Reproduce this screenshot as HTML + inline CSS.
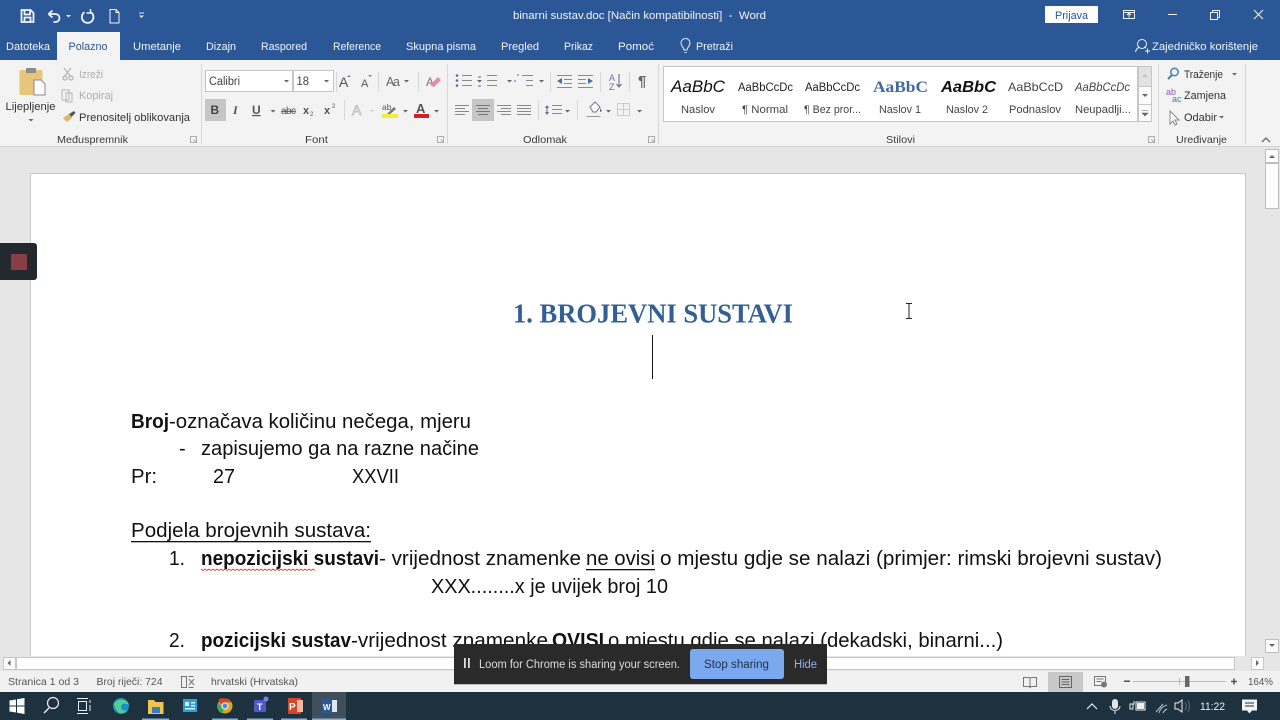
<!DOCTYPE html>
<html><head><meta charset="utf-8">
<style>
html,body{margin:0;padding:0;background:#e6e6e6;overflow:hidden;width:1280px;height:720px}
svg{display:block;position:absolute;left:0;top:0;filter:blur(.35px)}
text{font-family:"Liberation Sans",sans-serif;white-space:pre}
.rb{font-size:11px;fill:#444}
.tb{font-size:11px;fill:#f2f5fa}
.gl{font-size:10.5px;fill:#3c3c3c}
.st{font-size:10.5px;fill:#555}
.d{font-size:20px;fill:#111}
.b{font-weight:bold}
.g{fill:none;stroke:#777;stroke-width:1}
.ar{fill:#666}
</style></head><body>
<svg width="1280" height="720" viewBox="0 0 1280 720" xmlns="http://www.w3.org/2000/svg">
<!-- backgrounds -->
<rect width="1280" height="720" fill="#e6e6e6"/>
<rect width="1280" height="60" fill="#2b5797"/>
<rect y="60" width="1280" height="86" fill="#f3f3f3"/>
<rect y="146" width="1280" height="1" fill="#d4d4d4"/>
<rect x="57" y="32" width="63" height="28" fill="#f3f3f3"/>

<!-- QAT -->
<g fill="none" stroke="#f2f5fa" stroke-width="1.8">
<path d="M21.500 10h9l3 3v9h-12z"/><path d="M24.500 10.500v4h5.500v-4M24.500 22v-4.500h6V22"/>
<path d="M48.500 14l4-3.500M48.500 14l4 3.500M48.500 14h7a4 4 0 0 1 0 8h-2"/>
<path d="M90.500 12a5.800 5.800 0 1 1-6 .2"/><path d="M90.500 9v4h-4" stroke-width="1.400"/>
<path d="M110 9.500h6l3 3v10.500h-9z" stroke-width="1"/><path d="M116 9.500v3h3" stroke-width="1"/>
</g>
<path d="M66 15h5l-2.500 2.500zM139 15.500h5l-2.500 2.500z" fill="#dfe6f2"/>
<rect x="139" y="12.500" width="5" height="1" fill="#dfe6f2"/>

<!-- title bar -->
<text x="513" y="19" class="tb" textLength="253" lengthAdjust="spacingAndGlyphs">binarni sustav.doc [Način kompatibilnosti]  -  Word</text>
<rect x="1045" y="6" width="53" height="17" fill="#fdfdfd"/>
<text x="1055" y="19" style="font-size:11px;fill:#2b5797" textLength="33" lengthAdjust="spacingAndGlyphs">Prijava</text>
<g fill="none" stroke="#eef2f8" stroke-width="1">
<path d="M1123.500 10.500h11v8h-11zM1123.500 12.500h11M1129 17.500v-4M1127 15l2-2 2 2"/>
<path d="M1168 14.500h9"/>
<path d="M1210.500 12.500h7v7h-7zM1212.500 12.500v-2h7v7h-2"/>
<path d="M1254 10l9 9M1263 10l-9 9" stroke-width="1.100"/>
</g>

<!-- tabs -->
<g class="tb">
<text x="6" y="50" class="tb" textLength="44" lengthAdjust="spacingAndGlyphs">Datoteka</text>
<text x="68.500" y="50" style="font-size:11px;fill:#2b5797" textLength="39" lengthAdjust="spacingAndGlyphs">Polazno</text>
<text x="133" y="50" class="tb" textLength="48" lengthAdjust="spacingAndGlyphs">Umetanje</text>
<text x="206" y="50" class="tb" textLength="30" lengthAdjust="spacingAndGlyphs">Dizajn</text>
<text x="261" y="50" class="tb" textLength="46" lengthAdjust="spacingAndGlyphs">Raspored</text>
<text x="333" y="50" class="tb" textLength="48" lengthAdjust="spacingAndGlyphs">Reference</text>
<text x="406" y="50" class="tb" textLength="70" lengthAdjust="spacingAndGlyphs">Skupna pisma</text>
<text x="501" y="50" class="tb" textLength="38" lengthAdjust="spacingAndGlyphs">Pregled</text>
<text x="564" y="50" class="tb" textLength="29" lengthAdjust="spacingAndGlyphs">Prikaz</text>
<text x="618" y="50" class="tb" textLength="36" lengthAdjust="spacingAndGlyphs">Pomoć</text>
<text x="696" y="50" class="tb" textLength="37" lengthAdjust="spacingAndGlyphs">Pretraži</text>
<text x="1152" y="50" class="tb" textLength="106" lengthAdjust="spacingAndGlyphs">Zajedničko korištenje</text>
</g>
<g fill="none" stroke="#eef2f8" stroke-width="1">
<path d="M684 50c0-2.500-3-4-3-7a4.500 4.500 0 0 1 9 0c0 3-3 4.500-3 7zM684.500 52.500h2"/>
<circle cx="1142" cy="44" r="4.500"/><path d="M1135.500 52c.5-3 3-4.500 4-5M1144 47l2 1M1145 51h5M1147.500 48.500v5"/>
</g>

<!-- ribbon separators -->
<g fill="#d8d8d8">
<rect x="201" y="64" width="1" height="80"/><rect x="447" y="64" width="1" height="80"/>
<rect x="658" y="64" width="1" height="80"/><rect x="1158" y="64" width="1" height="80"/>
<rect x="1245" y="64" width="1" height="80"/>
<rect x="336" y="72" width="1" height="20"/><rect x="378" y="72" width="1" height="20"/><rect x="418" y="72" width="1" height="20"/>
<rect x="344" y="100" width="1" height="20"/><rect x="550" y="72" width="1" height="20"/><rect x="600" y="72" width="1" height="20"/><rect x="629" y="72" width="1" height="20"/>
<rect x="538" y="100" width="1" height="20"/><rect x="577" y="100" width="1" height="20"/>
</g>

<!-- clipboard -->
<rect x="19.500" y="70" width="23" height="25" rx="1" fill="#e8c57c"/>
<rect x="26" y="68" width="10" height="5" fill="#8d8d8d"/>
<path d="M34 80h7l4 4v11H34z" fill="#fff" stroke="#8a8a8a"/>
<text x="5.500" y="110" class="rb" style="fill:#333" textLength="50" lengthAdjust="spacingAndGlyphs">Lijepljenje</text>
<path d="M28.500 119h5l-2.500 2.500z" class="ar"/>
<g fill="none" stroke="#b5b5b5" stroke-width="1.200"><path d="M64 68l7 9M71 68l-7 9"/><circle cx="65" cy="78" r="2"/><circle cx="71" cy="78" r="2"/>
<path d="M62 90h7v10h-7zM66 93h6v9h-6z" stroke-width="1"/></g>
<text x="79" y="78" class="rb" style="fill:#adadad" textLength="24" lengthAdjust="spacingAndGlyphs">Izreži</text>
<text x="79" y="99" class="rb" style="fill:#adadad" textLength="34" lengthAdjust="spacingAndGlyphs">Kopiraj</text>
<path d="M63 118l6-4 3 4-5 4z" fill="#dbb66c"/><path d="M69 114l5-3 1.500 2-4 4z" fill="#555"/>
<text x="79" y="121" class="rb" style="fill:#333" textLength="111" lengthAdjust="spacingAndGlyphs">Prenositelj oblikovanja</text>
<text x="57" y="143" class="gl" textLength="71" lengthAdjust="spacingAndGlyphs">Međuspremnik</text>
<path d="M190.500 136.500h6v6h-6z M193.500 139.500l3 3" fill="none" stroke="#999" stroke-width=".8"/>

<!-- font -->
<rect x="205.500" y="70.500" width="87" height="21" fill="#fff" stroke="#c6c6c6"/>
<rect x="293.500" y="70.500" width="40" height="21" fill="#fff" stroke="#c6c6c6"/>
<text x="209" y="85" class="rb" style="font-size:11.500px" textLength="31" lengthAdjust="spacingAndGlyphs">Calibri</text>
<text x="296.500" y="85" class="rb" style="font-size:11.500px" textLength="12.500" lengthAdjust="spacingAndGlyphs">18</text>
<path d="M284 80h5l-2.500 2.500zM324 80h5l-2.500 2.500z" class="ar"/>
<text x="339" y="87" style="font-size:14px;fill:#555">A</text><path d="M347 77l2-2 2 2z" fill="#6a8ab0"/>
<text x="361" y="87" style="font-size:11px;fill:#555">A</text><path d="M368 75l2 2 2-2z" fill="#6a8ab0"/>
<text x="386" y="86" style="font-size:12.500px;fill:#666" textLength="14">Aa</text><path d="M404 80h5l-2.500 2.500z" class="ar"/>
<text x="426" y="86" style="font-size:12px;fill:#777">A</text><path d="M430 85l8-8 3 3-7 7z" fill="#e78ba0"/>
<rect x="205" y="99" width="21" height="22" fill="#c6c6c6"/>
<text x="210.500" y="114" style="font-size:12px;font-weight:bold;fill:#444">B</text>
<text x="233" y="114" style="font-size:12px;font-style:italic;font-weight:bold;fill:#555;font-family:'Liberation Serif',serif">I</text>
<text x="252" y="114" style="font-size:12px;font-weight:bold;fill:#555;text-decoration:underline">U</text>
<path d="M270.500 110h5l-2.500 2.500z" class="ar"/>
<text x="281" y="114" style="font-size:10px;fill:#555;text-decoration:line-through" textLength="15">abc</text>
<text x="303" y="114" style="font-size:11px;font-weight:bold;fill:#555">x</text><text x="310" y="116" style="font-size:6px;fill:#555">2</text>
<text x="324" y="114" style="font-size:11px;font-weight:bold;fill:#555">x</text><text x="332" y="108" style="font-size:6px;fill:#555">2</text>
<text x="352" y="115" style="font-size:14px;fill:#f3f3f3;stroke:#bbb;stroke-width:.8">A</text><path d="M370 110h4l-2 2z" fill="#ccc"/>
<text x="382" y="110" style="font-size:8.500px;fill:#555">ab</text><path d="M387 114l7-7 2 2-7 6z" fill="#777"/>
<rect x="382" y="114" width="16" height="4" fill="#f4ee30"/><path d="M403 110h5l-2.500 2.500z" class="ar"/>
<text x="416" y="113" style="font-size:13px;font-weight:bold;fill:#555">A</text><rect x="414" y="114" width="15" height="4" fill="#d81e1e"/><path d="M434 110h5l-2.500 2.500z" class="ar"/>
<text x="305" y="143" class="gl" textLength="23" lengthAdjust="spacingAndGlyphs">Font</text>
<path d="M437.500 136.500h6v6h-6z M440.500 139.500l3 3" fill="none" stroke="#999" stroke-width=".8"/>

<!-- paragraph -->
<g stroke="#8a8a8a" stroke-width="1" fill="none">
<path d="M462 75.500h10M462 80.500h10M462 85.500h10M487 75.500h10M487 80.500h10M487 85.500h10M522 75.500h11M526 80.500h7M526 85.500h7M557 75.500h15M564 79.500h8M564 83.500h8M557 87.500h15M578 75.500h15M578 79.500h8M578 83.500h8M578 87.500h15"/>
<path d="M455 105.500h14M455 108.500h10M455 111.500h14M455 114.500h10M476 105.500h14M478 108.500h10M476 111.500h14M478 114.500h10M497 105.500h14M501 108.500h10M497 111.500h14M501 114.500h10M517 105.500h14M517 108.500h14M517 111.500h14M517 114.500h14M552 105.500h10M552 109.500h10M552 113.500h10"/>
</g>
<rect x="472" y="99" width="22" height="22" fill="#c6c6c6"/>
<path d="M476 105.500h14M478 108.500h10M476 111.500h14M478 114.500h10" stroke="#777" fill="none"/>
<g fill="#4a6fa5"><circle cx="457" cy="75.500" r="1.300"/><circle cx="457" cy="80.500" r="1.300"/><circle cx="457" cy="85.500" r="1.300"/>
<path d="M557 81l5-3v6zM593 81l-5-3v6z"/><path d="M545 108l2-3 2 3zM545 112l2 3 2-3z"/><rect x="546.500" y="107" width="1" height="6"/></g>
<path d="M478 77h3M478 81h3M478 86h3M517 75h2M514 81h2" stroke="#4a6fa5" fill="none"/>
<text x="609" y="81" style="font-size:9px;fill:#5a7dab">A</text><text x="609" y="90" style="font-size:9px;fill:#8a5db0">Z</text>
<path d="M619 74v13M616.500 84l2.500 3 2.500-3" stroke="#666" fill="none"/>
<text x="638" y="86" style="font-size:15px;font-weight:bold;fill:#666">¶</text>
<path d="M477 80h5l-2.500 2.500zM507 80h5l-2.500 2.500zM539 80h5l-2.500 2.500zM565 110h5l-2.500 2.500zM606 110h5l-2.500 2.500zM637 110h5l-2.500 2.500z" class="ar"/>
<path d="M590 107l5-5 5 5-4 5h-3z" fill="#fff" stroke="#777"/><path d="M600 108l2 3-2 1z" fill="#4a6fa5"/><path d="M586.500 116.500h14" stroke="#999" fill="none"/>
<path d="M617.500 103.500h12v12h-12zM623.500 103.500v12M617.500 109.500h12" stroke="#aaa" stroke-dasharray="1 1" fill="none"/>
<text x="523" y="143" class="gl" textLength="44" lengthAdjust="spacingAndGlyphs">Odlomak</text>
<path d="M648.500 136.500h6v6h-6z M651.500 139.500l3 3" fill="none" stroke="#999" stroke-width=".8"/>

<!-- styles -->
<rect x="663.500" y="66.500" width="474" height="55" fill="#fff" stroke="#c6c6c6"/>
<rect x="1138" y="66.500" width="14" height="55" fill="#f3f3f3"/>
<path d="M1138.500 66.500h13v20h-13zM1138.500 86.500h13v18h-13zM1138.500 104.500h13v17h-13z" fill="#fbfbfb" stroke="#c6c6c6"/>
<rect x="1139" y="67" width="12" height="19" fill="#e2e2e2"/>
<path d="M1142 77l3-3 3 3z" fill="#c4c4c4"/><path d="M1142 94h6l-3 3z" class="ar"/><path d="M1142 110.500h6M1142 113h6l-3 3z" fill="#666" stroke="#666" stroke-width=".6"/>
<text x="671" y="92" style="font-size:17px;font-style:italic;fill:#111" textLength="54" lengthAdjust="spacingAndGlyphs">AaBbC</text>
<text x="738" y="91" style="font-size:11.500px;fill:#222" textLength="55" lengthAdjust="spacingAndGlyphs">AaBbCcDc</text>
<text x="805" y="91" style="font-size:11.500px;fill:#222" textLength="55" lengthAdjust="spacingAndGlyphs">AaBbCcDc</text>
<text x="873" y="92" style="font-size:16px;font-weight:bold;fill:#3f6a9c;font-family:'Liberation Serif',serif" textLength="55" lengthAdjust="spacingAndGlyphs">AaBbC</text>
<text x="941" y="92" style="font-size:16px;font-weight:bold;font-style:italic;fill:#111" textLength="55" lengthAdjust="spacingAndGlyphs">AaBbC</text>
<text x="1008" y="91" style="font-size:12px;fill:#444" textLength="55" lengthAdjust="spacingAndGlyphs">AaBbCcD</text>
<text x="1075" y="91" style="font-size:11.500px;font-style:italic;fill:#444" textLength="55" lengthAdjust="spacingAndGlyphs">AaBbCcDc</text>
<g class="rb">
<text x="681" y="113" class="rb" textLength="34" lengthAdjust="spacingAndGlyphs">Naslov</text>
<text x="742" y="113" class="rb" textLength="46" lengthAdjust="spacingAndGlyphs">¶ Normal</text>
<text x="804" y="113" class="rb" textLength="57" lengthAdjust="spacingAndGlyphs">¶ Bez pror...</text>
<text x="879" y="113" class="rb" textLength="42" lengthAdjust="spacingAndGlyphs">Naslov 1</text>
<text x="946" y="113" class="rb" textLength="42" lengthAdjust="spacingAndGlyphs">Naslov 2</text>
<text x="1009" y="113" class="rb" textLength="52" lengthAdjust="spacingAndGlyphs">Podnaslov</text>
<text x="1075" y="113" class="rb" textLength="56" lengthAdjust="spacingAndGlyphs">Neupadlji...</text>
</g>
<text x="886" y="143" class="gl" textLength="29" lengthAdjust="spacingAndGlyphs">Stilovi</text>
<path d="M1148.500 136.500h6v6h-6z M1151.500 139.500l3 3" fill="none" stroke="#999" stroke-width=".8"/>

<!-- editing -->
<circle cx="1174.500" cy="72" r="3.700" fill="none" stroke="#4f7fb8" stroke-width="1.500"/><path d="M1172 75l-4 4" stroke="#4f7fb8" stroke-width="2"/>
<text x="1184" y="78" class="rb" style="fill:#333" textLength="39" lengthAdjust="spacingAndGlyphs">Traženje</text>
<path d="M1232 73h5l-2.500 2.500z" class="ar"/>
<text x="1166" y="95" style="font-size:9px;fill:#8a5db0">ab</text><text x="1172" y="102" style="font-size:9px;fill:#3f78b8">ac</text>
<text x="1184" y="99" class="rb" style="fill:#333" textLength="42" lengthAdjust="spacingAndGlyphs">Zamjena</text>
<path d="M1170 111v13l3-3 2 4 2-1-2-4h4z" fill="#fff" stroke="#888"/>
<text x="1184" y="121" class="rb" style="fill:#333" textLength="33" lengthAdjust="spacingAndGlyphs">Odabir</text>
<path d="M1219 116h5l-2.500 2.500z" class="ar"/>
<text x="1176" y="143" class="gl" textLength="51" lengthAdjust="spacingAndGlyphs">Uređivanje</text>
<path d="M1262 142l4-4 4 4" fill="none" stroke="#666" stroke-width="1.300"/>

<!-- page -->
<rect x="30.500" y="173.500" width="1215" height="484" fill="#fff" stroke="#c9c9c9"/>

<!-- doc text -->
<text x="513" y="322.500" style="font-family:'Liberation Serif',serif;font-size:27px;font-weight:bold;fill:#335f95" textLength="280" lengthAdjust="spacingAndGlyphs">1. BROJEVNI SUSTAVI</text>
<rect x="652" y="335" width="1" height="44" fill="#111"/>
<path d="M906 303.500h2.500l.5.500.5-.5h2.500M906 318.500h2.500l.5-.5.5.5h2.500M909 304v14" stroke="#222" fill="none"/>

<text x="131" y="428" class="d b" textLength="38" lengthAdjust="spacingAndGlyphs">Broj</text>
<text x="169" y="428" class="d" textLength="302" lengthAdjust="spacingAndGlyphs">-označava količinu nečega, mjeru</text>
<text x="179" y="455" class="d">-</text>
<text x="201" y="455" class="d" textLength="278" lengthAdjust="spacingAndGlyphs">zapisujemo ga na razne načine</text>
<text x="131" y="483" class="d" textLength="26" lengthAdjust="spacingAndGlyphs">Pr:</text>
<text x="213" y="483" class="d" textLength="22" lengthAdjust="spacingAndGlyphs">27</text>
<text x="352" y="483" class="d" textLength="47" lengthAdjust="spacingAndGlyphs">XXVII</text>
<text x="131" y="537" class="d" textLength="240" lengthAdjust="spacingAndGlyphs">Podjela brojevnih sustava:</text>
<rect x="131" y="541" width="240" height="1.300" fill="#111"/>
<text x="169" y="565" class="d" textLength="16" lengthAdjust="spacingAndGlyphs">1.</text>
<text x="201" y="565" class="d b" textLength="178" lengthAdjust="spacingAndGlyphs">nepozicijski sustavi</text>
<text x="379" y="565" class="d" textLength="202" lengthAdjust="spacingAndGlyphs">- vrijednost znamenke</text>
<text x="586" y="565" class="d" textLength="69" lengthAdjust="spacingAndGlyphs">ne ovisi</text>
<rect x="586" y="569" width="69" height="1.300" fill="#111"/>
<text x="660" y="565" class="d" textLength="502" lengthAdjust="spacingAndGlyphs">o mjestu gdje se nalazi (primjer: rimski brojevni sustav)</text>
<path d="M201 569l2 1.500 2-1.500 2 1.500 2-1.500 2 1.500 2-1.500 2 1.500 2-1.500 2 1.500 2-1.500 2 1.500 2-1.500 2 1.500 2-1.500 2 1.500 2-1.500 2 1.500 2-1.500 2 1.500 2-1.500 2 1.500 2-1.500 2 1.500 2-1.500 2 1.500 2-1.500 2 1.500 2-1.500 2 1.500 2-1.500 2 1.500 2-1.500 2 1.500 2-1.500 2 1.500 2-1.500 2 1.500 2-1.500 2 1.500 2-1.500 2 1.500 2-1.500 2 1.500 2-1.500 2 1.500 2-1.500 2 1.500 2-1.500 2 1.500 2-1.500 2 1.500 2-1.500 2 1.500 2-1.500 2 1.500 2-1.500 2 1.500" fill="none" stroke="#d9342c" stroke-width=".8"/>
<text x="431" y="593" class="d" textLength="237" lengthAdjust="spacingAndGlyphs">XXX........x je uvijek broj 10</text>
<text x="169" y="647" class="d" textLength="16" lengthAdjust="spacingAndGlyphs">2.</text>
<text x="201" y="647" class="d b" textLength="150" lengthAdjust="spacingAndGlyphs">pozicijski sustav</text>
<text x="351" y="647" class="d" textLength="197" lengthAdjust="spacingAndGlyphs">-vrijednost znamenke</text>
<text x="552" y="647" class="d b" textLength="52" lengthAdjust="spacingAndGlyphs">OVISI</text>
<rect x="552" y="651" width="52" height="1.300" fill="#111"/>
<text x="608" y="647" class="d" textLength="395" lengthAdjust="spacingAndGlyphs">o mjestu gdje se nalazi (dekadski, binarni...)</text>

<!-- left widget -->
<path d="M0 243h34a3 3 0 0 1 3 3v31a3 3 0 0 1-3 3H0z" fill="#23292f"/>
<rect x="11" y="254" width="16" height="16" rx="1" fill="#8b3d44"/>

<!-- v scrollbar -->
<rect x="1264" y="147" width="16" height="510" fill="#e6e6e6"/>
<rect x="1265.500" y="149.500" width="13" height="13" fill="#fdfdfd" stroke="#bdbdbd"/>
<path d="M1269 158l3-3 3 3z" fill="#666"/>
<rect x="1265.500" y="163.500" width="13" height="45" fill="#fdfdfd" stroke="#bdbdbd"/>
<rect x="1265.500" y="639.500" width="13" height="13" fill="#fdfdfd" stroke="#bdbdbd"/>
<path d="M1269 644h6l-3 3z" fill="#666"/>

<!-- h scrollbar -->
<rect y="656" width="1280" height="15" fill="#e6e6e6"/>
<rect x="3.500" y="657.500" width="12" height="12" fill="#fdfdfd" stroke="#c6c6c6"/>
<path d="M10.500 660v6l-3-3z" fill="#666"/>
<rect x="16.500" y="657.500" width="1218" height="12" fill="#fff" stroke="#c6c6c6"/>
<rect x="1251.500" y="657.500" width="12" height="12" fill="#fdfdfd" stroke="#c6c6c6"/>
<path d="M1256 660v6l3-3z" fill="#666"/>

<!-- status bar -->
<rect y="671" width="1280" height="21" fill="#f1f1f1"/>
<text x="8" y="685" class="st" textLength="71" lengthAdjust="spacingAndGlyphs">Stranica 1 od 3</text>
<text x="96.500" y="685" class="st" textLength="66" lengthAdjust="spacingAndGlyphs">Broj riječi: 724</text>
<path d="M181.500 676.500h5v11h-5zM188.500 676.500h5M188.500 687.500h5M189 679l5 6M194 679l-5 6" fill="none" stroke="#777"/>
<text x="211" y="685" class="st" textLength="87" lengthAdjust="spacingAndGlyphs">hrvatski (Hrvatska)</text>
<path d="M1023.500 677.500h5.500l1 1 1-1h5.500v9h-5.500l-1 1-1-1h-5.500zM1030 678v9" fill="none" stroke="#777"/>
<rect x="1048" y="672" width="35" height="20" fill="#c8c8c8"/>
<path d="M1059.500 676.500h12v11h-12zM1061.500 679.500h8M1061.500 682h8M1061.500 684.500h8" fill="none" stroke="#666"/>
<path d="M1094.500 676.500h11v9h-11zM1096.500 679h7M1096.500 681.500h5" fill="none" stroke="#777"/><circle cx="1104" cy="684.500" r="3" fill="#777"/>
<rect x="1124" y="680.500" width="6" height="1.500" fill="#555"/>
<rect x="1133" y="681" width="93" height="1" fill="#bbb"/>
<rect x="1179" y="678" width="1" height="7" fill="#bbb"/>
<rect x="1185" y="676" width="4.500" height="11" fill="#666"/>
<path d="M1231 681.500h6M1234 678.500v6" stroke="#555" stroke-width="1.500" fill="none"/>
<text x="1248" y="685" class="st" textLength="25" lengthAdjust="spacingAndGlyphs">164%</text>

<!-- taskbar -->
<rect y="692" width="1280" height="28" fill="#1e313e"/>
<g fill="#fff"><path d="M9.500 700.500l6.500-1v6h-6.500zM17 699.300l7.500-1.300v7.500H17zM9.500 706.500h6.500v6l-6.500-1zM17 706.500h7.500v7.500l-7.500-1.300z"/></g>
<circle cx="53" cy="703" r="5.500" fill="none" stroke="#eee" stroke-width="1.200"/><path d="M49 708l-5 5" stroke="#eee" stroke-width="1.400"/>
<path d="M78.500 701.500h8v9h-8zM77 698.500h11M77 713.500h11M90 700v3M90 705v6" fill="none" stroke="#eee"/>
<circle cx="121" cy="706" r="8" fill="#1a8fce"/><path d="M114 704c2-6 13-6 15 1-3-2-8-2-8 2 0 3 4 5 7 3-3 4-8 4-10 2-2-2-3-5-4-8z" fill="#4fd08a"/>
<path d="M148 700h6l1.500 2h8v12h-15.500z" fill="#f0c34d"/><rect x="152" y="707" width="8" height="6" fill="#3e7cc0"/>
<rect x="183" y="699" width="14" height="13" fill="#2d9fd6"/><rect x="185" y="702" width="4" height="4" fill="#d8ecf7"/><rect x="191" y="702" width="4" height="1.500" fill="#d8ecf7"/><rect x="191" y="705" width="4" height="1.500" fill="#d8ecf7"/><rect x="185" y="708" width="10" height="1.500" fill="#d8ecf7"/>
<circle cx="225" cy="706" r="7.500" fill="#d8a820"/><path d="M225 698.500a7.500 7.500 0 0 1 6.500 3.700H225a4 4 0 0 0-3.800 2.500l-3-5a7.500 7.500 0 0 1 6.800-1.200z" fill="#d8432f"/><path d="M218 702.500a7.500 7.500 0 0 0 4 10.800l3-5.500-3.500-1z" fill="#3ba758"/><circle cx="225" cy="706" r="3" fill="#4a86e8" stroke="#fff"/>
<rect x="254" y="700" width="12" height="12" rx="1.500" fill="#5059c9"/><circle cx="266" cy="699" r="2.500" fill="#7b83eb"/><text x="257" y="710" style="font-size:9px;font-weight:bold;fill:#fff">T</text>
<rect x="288" y="698" width="13" height="16" fill="#d24726"/><rect x="297" y="700" width="6" height="12" fill="#f0b7a5"/><text x="289" y="710" style="font-size:10px;font-weight:bold;fill:#fff">P</text>
<rect x="312" y="692" width="34" height="28" fill="#3e4f5b"/>
<rect x="322" y="699" width="10" height="14" fill="#2b5797"/><text x="323" y="710" style="font-size:8px;font-weight:bold;fill:#fff">W</text><rect x="332" y="700" width="5" height="12" fill="#dfe6f2"/>
<g fill="#7db3e0"><rect x="142" y="718.500" width="27" height="1.500"/><rect x="212" y="718.500" width="26" height="1.500"/><rect x="247" y="718.500" width="26" height="1.500"/><rect x="281" y="718.500" width="26" height="1.500"/><rect x="312" y="718.500" width="34" height="1.500"/></g>
<path d="M1087 709l5-5 5 5" fill="none" stroke="#eee" stroke-width="1.200"/>
<rect x="1112" y="699" width="6" height="10" rx="3" fill="#dfe4e8"/><path d="M1110 706c0 6 10 6 10 0M1115 711v3" stroke="#dfe4e8" fill="none"/>
<path d="M1131 704h3v-3M1133 704h-3v5h3zM1136 702h9v8h-9z" fill="none" stroke="#eee"/><rect x="1137" y="703" width="7" height="6" fill="#eee"/>
<path d="M1156 712l7-8M1159 713c1-4 4-7 8-8M1163 713c1-2 2-3 4-4" fill="none" stroke="#b9c4cb"/>
<path d="M1175 703h3l4-3v12l-4-3h-3z" fill="none" stroke="#eee"/><path d="M1185 702c2 3 2 5 0 8M1188 700c2 4 2 8 0 12" fill="none" stroke="#5e6c76"/>
<text x="1200" y="710" style="font-size:11px;fill:#eef1f3" textLength="25" lengthAdjust="spacingAndGlyphs">11:22</text>
<path d="M1242 699.500h15v11h-5l-2.500 3-2.500-3h-5z" fill="#f1f3f4"/><path d="M1245 703h9M1245 706h9" stroke="#1e313e"/>

<!-- loom bar -->
<rect x="454" y="644" width="373" height="40" fill="#2a2a2b"/>
<rect x="454" y="684" width="373" height="1" fill="#bbb"/>
<rect x="464" y="658" width="1.800" height="10" fill="#ddd"/><rect x="468" y="658" width="1.800" height="10" fill="#ddd"/>
<text x="479" y="668" style="font-size:11.500px;fill:#dcdcdc" textLength="201" lengthAdjust="spacingAndGlyphs">Loom for Chrome is sharing your screen.</text>
<rect x="690" y="649" width="94" height="30" rx="3" fill="#7aa9f0"/>
<text x="704" y="668" style="font-size:11.500px;fill:#22324a" textLength="65" lengthAdjust="spacingAndGlyphs">Stop sharing</text>
<text x="794" y="668" style="font-size:11.500px;fill:#8ab0ee" textLength="23" lengthAdjust="spacingAndGlyphs">Hide</text>
</svg>
</body></html>
